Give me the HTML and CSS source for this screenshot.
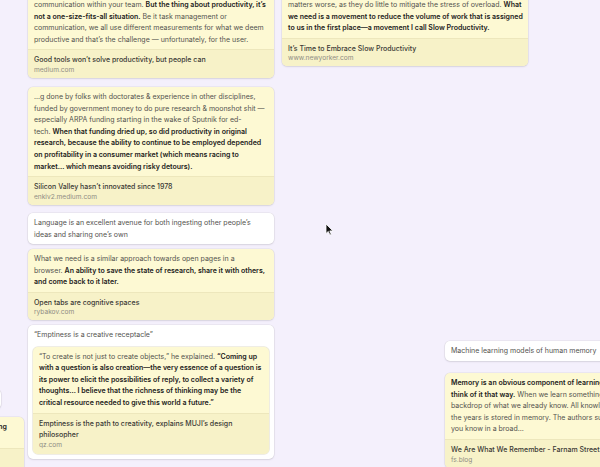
FILE: index.html
```html
<!DOCTYPE html>
<html lang="en">
<head>
<meta charset="utf-8">
<title>Canvas</title>
<link rel="stylesheet" href="styles.css">
</head>
<body>
<main class="canvas">

  <article class="card yellow n-good">
    <div class="body">communication within your team. <b>But the thing about productivity, it’s not a one-size-fits-all situation.</b> Be it task management or communication, we all use different measurements for what we deem productive and that’s the challenge — unfortunately, for the user.</div>
    <footer class="foot">
      <div class="title">Good tools won’t solve productivity, but people can</div>
      <div class="domain">medium.com</div>
    </footer>
  </article>

  <article class="card yellow n-silicon">
    <div class="body">...g done by folks with doctorates &amp; experience in other disciplines, funded by government money to do pure research &amp; moonshot shit — especially ARPA funding starting in the wake of Sputnik for ed-<br>tech. <b>When that funding dried up, so did productivity in original research, because the ability to continue to be employed depended on profitability in a consumer market (which means racing to market… which means avoiding risky detours).</b></div>
    <footer class="foot">
      <div class="title">Silicon Valley hasn’t innovated since 1978</div>
      <div class="domain">enkiv2.medium.com</div>
    </footer>
  </article>

  <article class="card plain n-language">
    <div class="body">Language is an excellent avenue for both ingesting other people’s ideas and sharing one’s own</div>
  </article>

  <article class="card yellow n-tabs">
    <div class="body">What we need is a similar approach towards open pages in a<br>browser. <b>An ability to save the state of research, share it with others, and come back to it later.</b></div>
    <footer class="foot">
      <div class="title">Open tabs are cognitive spaces</div>
      <div class="domain">rybakov.com</div>
    </footer>
  </article>

  <article class="card plain group n-emptiness">
    <div class="group-title">“Emptiness is a creative receptacle”</div>
    <div class="card yellow inner">
      <div class="body">“To create is not just to create objects,” he explained. <b>“Coming up with a question is also creation—the very essence of a question is its power to elicit the possibilities of reply, to collect a variety of thoughts… I believe that the richness of thinking may be the critical resource needed to give this world a future.”</b></div>
      <footer class="foot">
        <div class="title">Emptiness is the path to creativity, explains MUJI’s design philosopher</div>
        <div class="domain">qz.com</div>
      </footer>
    </div>
  </article>

  <article class="card yellow n-slow">
    <div class="body">matters worse, as they do little to mitigate the stress of overload. <b>What we need is a movement to reduce the volume of work that is assigned to us in the first place—a movement I call Slow Productivity.</b></div>
    <footer class="foot">
      <div class="title">It’s Time to Embrace Slow Productivity</div>
      <div class="domain">www.newyorker.com</div>
    </footer>
  </article>

  <article class="card plain n-machine">
    <div class="body">Machine learning models of human memory</div>
  </article>

  <article class="card yellow n-memory">
    <div class="body"><b>Memory is an obvious component of learning, though we don’t often think of it that way.</b> When we learn something new, we do it on the backdrop of what we already know. All knowledge we gained over<br>the years is stored in memory. The authors suggest that what<br>you know in a broad…</div>
    <footer class="foot">
      <div class="title">We Are What We Remember - Farnam Street</div>
      <div class="domain">fs.blog</div>
    </footer>
  </article>

  <article class="card plain n-edge-white">
    <div class="body">Notes</div>
  </article>

  <article class="card yellow n-edge-yellow">
    <div class="body"><b>Spaced repetition is by far the most effective way of remembering everything</b> we learn.</div>
    <footer class="foot">
      <div class="title">Learning</div>
      <div class="domain">example.com</div>
    </footer>
  </article>

  <svg class="cursor" width="9" height="13" viewBox="0 0 9 13" aria-hidden="true">
    <path d="M1 1 L1 10.5 L3.3 8.4 L4.9 12 L6.3 11.4 L4.8 7.9 L7.9 7.9 Z" fill="#111" stroke="#fff" stroke-width="0.8" stroke-linejoin="round"/>
  </svg>
</main>
</body>
</html>
```

FILE: styles.css
```css
html, body {
  margin: 0;
  padding: 0;
}

body {
  background: #f4f0fc;
  width: 600px;
  height: 467px;
  overflow: hidden;
}

.canvas {
  position: relative;
  width: 600px;
  height: 467px;
  overflow: hidden;
  font-family: Inter, "Noto Sans", sans-serif;
}

.card {
  position: absolute;
  width: 246px;
  box-sizing: border-box;
  border-radius: 5px;
  font-size: 7px;
  line-height: 11.6px;
  color: #53524e;
  overflow: hidden;
  box-shadow: 0 0 0 0.6px rgba(60, 50, 20, 0.09), 0 1px 2px rgba(40, 30, 60, 0.1);
}

.yellow {
  background: #fdf9d3;
}

.plain {
  background: #ffffff;
}

.body {
  padding: 4px 5px 4px 6px;
}

.body b {
  font-weight: 600;
  color: #222120;
}

.foot {
  background: #f7f2c8;
  border-top: 1px solid #ede7bc;
  padding: 4px 5px 3px 6px;
}

.title {
  color: #3a3935;
  font-weight: 500;
  font-size: 7px;
}

.domain {
  font-size: 6.6px;
  line-height: 9px;
  color: #8f8d84;
}

/* grouped card */
.group {
  padding: 4px 5px 5px;
}

.group-title {
  padding: 0 1px 6px;
}

.inner {
  position: static;
  width: auto;
  box-shadow: 0 0 0 0.8px rgba(120, 105, 40, 0.16);
}

.inner .foot {
  padding-bottom: 4px;
}

/* node positions on the canvas */
.n-good { left: 28px; top: -5px; }
.n-silicon { left: 28px; top: 87px; }
.n-language { left: 28px; top: 213px; }
.n-tabs { left: 28px; top: 249px; }
.n-emptiness { left: 28px; top: 325px; }
.n-slow { left: 282px; top: -5px; }
.n-machine { left: 445px; top: 341px; }
.n-memory { left: 445px; top: 373px; }
.n-edge-white { left: -245px; top: 389px; }
.n-edge-yellow { left: -222px; top: 417px; }

.cursor {
  position: absolute;
  left: 325px;
  top: 223px;
}
```
